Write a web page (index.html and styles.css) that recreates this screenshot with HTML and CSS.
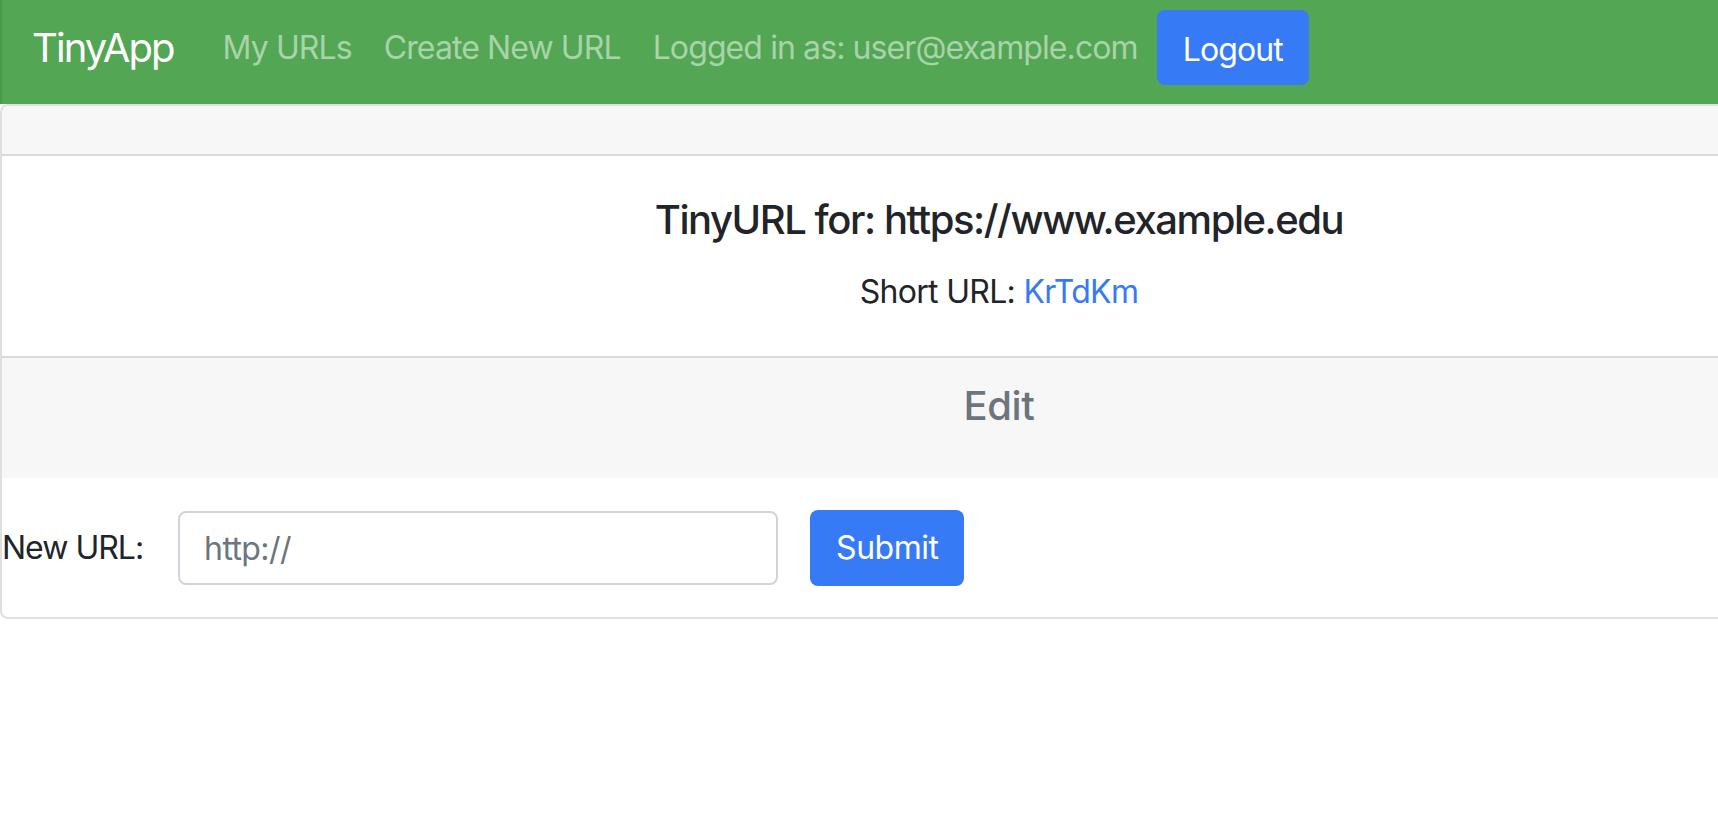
FILE: index.html
```html
<!DOCTYPE html>
<html lang="en">
<head>
<meta charset="utf-8">
<title>TinyApp</title>
<link rel="stylesheet" href="styles.css">
</head>
<body>
<nav class="navbar">
  <a class="brand" href="#">TinyApp</a>
  <a class="nav-link" href="#">My URLs</a>
  <a class="nav-link" href="#">Create New URL</a>
  <span class="nav-text">Logged in as: user@example.com</span>
  <button class="btn btn-nav" type="button">Logout</button>
</nav>
<main class="card">
  <div class="card-header"></div>
  <div class="card-body">
    <h5 class="card-title">TinyURL for: https://www.example.edu</h5>
    <p class="card-text">Short URL: <a class="short-link" href="#">KrTdKm</a></p>
  </div>
  <div class="edit-header">
    <h3 class="edit-title">Edit</h3>
  </div>
  <form class="edit-form">
    <label class="form-label" for="newurl">New URL:</label>
    <input class="form-input" id="newurl" type="text" placeholder="http://">
    <button class="btn btn-submit" type="submit">Submit</button>
  </form>
</main>
</body>
</html>
```

FILE: styles.css
```css
html, body {
  margin: 0;
  padding: 0;
  overflow: hidden;
  background: #ffffff;
}

body {
  font-family: Inter, "Liberation Sans", sans-serif;
  color: #212529;
}

a {
  text-decoration: none;
}

/* ---------- navbar ---------- */
.navbar {
  display: flex;
  align-items: flex-start;
  height: 104px;
  box-sizing: border-box;
  padding: 0 32px 0 30px;
  background: #53a653;
  border-left: 2px solid #4b9a4b;
}

.brand {
  margin-top: 18px;
  font-size: 40px;
  line-height: 60px;
  color: #ffffff;
  margin-right: 33px;
  letter-spacing: -1.9px;
}

.nav-link,
.nav-text {
  margin-top: 24px;
  padding: 0 16px;
  font-size: 32px;
  line-height: 48px;
  color: #a9d3a9;
  letter-spacing: -0.9px;
}

.nav-text {
  padding-right: 0;
  margin-right: 19px;
}

.btn {
  font-family: Inter, "Liberation Sans", sans-serif;
  border: none;
  border-radius: 8px;
  background: #377af5;
  color: #ffffff;
  font-size: 32px;
  cursor: pointer;
}

.btn-nav {
  margin-top: 10px;
  height: 75px;
  box-sizing: border-box;
  padding: 4px 26px 0;
  line-height: 71px;
  letter-spacing: -0.9px;
}

/* ---------- card ---------- */
.card {
  width: 1998px;
  box-sizing: border-box;
  border: 2px solid #dfdfdf;
  border-radius: 8px;
  overflow: hidden;
}

.card-header {
  height: 48px;
  background: #f7f7f7;
  border-bottom: 2px solid #d9d9d9;
}

.card-body {
  padding: 40px;
  text-align: center;
  border-bottom: 2px solid #d9d9d9;
}

.card-title {
  margin: 0 0 24px;
  font-size: 40px;
  line-height: 48px;
  font-weight: 500;
  letter-spacing: -1.45px;
}

.card-text {
  margin: 0;
  font-size: 32px;
  line-height: 48px;
  letter-spacing: -0.7px;
}

.short-link {
  color: #377af5;
}

.edit-header {
  background: #f7f7f7;
  padding: 24px 0;
  text-align: center;
}

.edit-title {
  margin: 0 0 24px;
  font-size: 40px;
  line-height: 48px;
  font-weight: 500;
  color: #6c757d;
  letter-spacing: -0.4px;
}

/* ---------- form ---------- */
.edit-form {
  display: flex;
  align-items: center;
  margin: 0;
  padding: 32px 0 31px 0;
}

.form-label {
  font-size: 32px;
  line-height: 48px;
  margin-right: 35px;
  letter-spacing: -1px;
}

.form-input {
  width: 600px;
  height: 74px;
  box-sizing: border-box;
  padding: 0 24px;
  border: 2px solid #ced4da;
  border-radius: 8px;
  font-family: Inter, "Liberation Sans", sans-serif;
  font-size: 32px;
  color: #495057;
  letter-spacing: -0.6px;
  outline: none;
}

.form-input::placeholder {
  color: #6c757d;
}

.btn-submit {
  margin-left: 32px;
  height: 76px;
  padding: 0 26px;
  line-height: 76px;
  letter-spacing: -0.5px;
}
```
